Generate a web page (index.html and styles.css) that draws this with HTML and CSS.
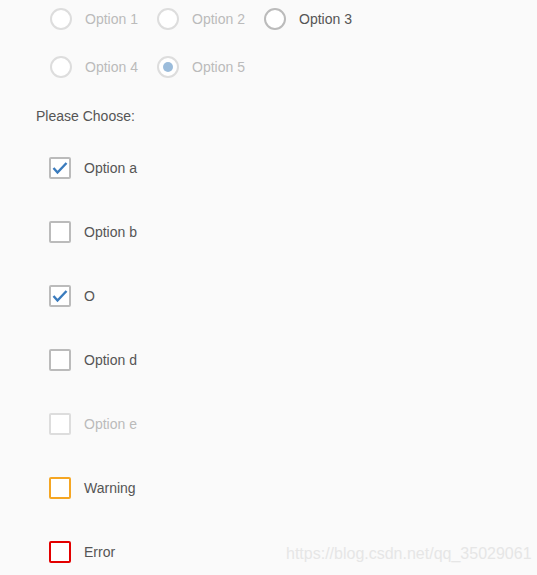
FILE: index.html
```html
<!DOCTYPE html>
<html lang="en">
<head>
    <meta charset="UTF-8">
    <title>Radio and Checkbox</title>
    <link rel="stylesheet" href="styles.css">
</head>
<body>
    <!-- Radio group -->
    <div class="radio-group">
        <label class="radio disabled"><span class="circle"></span>Option 1</label>
        <label class="radio disabled"><span class="circle"></span>Option 2</label>
        <label class="radio"><span class="circle"></span>Option 3</label>
        <label class="radio disabled"><span class="circle"></span>Option 4</label>
        <label class="radio disabled checked"><span class="circle"></span>Option 5</label>
    </div>

    <p class="choose">Please Choose:</p>

    <!-- Checkbox list -->
    <div class="check-list">
        <label class="check checked"><span class="box"><svg viewBox="0 0 22 22"><path d="M4.5 11 L8.5 15.5 L17.5 6"/></svg></span>Option a</label>
        <label class="check"><span class="box"></span>Option b</label>
        <label class="check checked"><span class="box"><svg viewBox="0 0 22 22"><path d="M4.5 11 L8.5 15.5 L17.5 6"/></svg></span>O</label>
        <label class="check"><span class="box"></span>Option d</label>
        <label class="check disabled"><span class="box"></span>Option e</label>
        <label class="check warning"><span class="box"></span>Warning</label>
        <label class="check error"><span class="box"></span>Error</label>
    </div>

    <div class="watermark">https://blog.csdn.net/qq_35029061</div>
</body>
</html>
```

FILE: styles.css
```css
body {
    font-family: "Liberation Sans", Arial, sans-serif;
    font-size: 14px;
    background-color: #fafafa;
    color: #555;
    margin: 0;
    padding: 0;
    position: relative;
    height: 575px;
    overflow: hidden;
}
.radio-group {
    display: grid;
    grid-template-columns: repeat(3, 107px);
    row-gap: 26px;
    padding: 8px 0 0 50px;
}
.radio {
    display: flex;
    align-items: center;
    gap: 13px;
    height: 22px;
    line-height: 16px;
}
.radio .circle {
    box-sizing: border-box;
    width: 22px;
    height: 22px;
    border: 2px solid #bbb;
    border-radius: 50%;
    background-color: #fff;
    display: flex;
    align-items: center;
    justify-content: center;
}
.radio.disabled {
    color: #bbb;
}
.radio.disabled .circle {
    border-color: #ddd;
}
.radio.checked .circle::after {
    content: "";
    width: 10px;
    height: 10px;
    border-radius: 50%;
    background-color: #9bbcdb;
}
.choose {
    margin: 30px 0 0 36px;
    line-height: 16px;
}
.check-list {
    padding: 12px 0 0 49px;
}
.check {
    display: flex;
    align-items: center;
    gap: 13px;
    height: 64px;
    line-height: 16px;
}
.check .box {
    box-sizing: border-box;
    width: 22px;
    height: 22px;
    border: 2px solid #bbb;
    border-radius: 2px;
    background-color: #fff;
    position: relative;
}
.check .box svg {
    position: absolute;
    left: -2px;
    top: -2px;
    width: 22px;
    height: 22px;
}
.check .box path {
    fill: none;
    stroke: #3a7bbd;
    stroke-width: 2.4;
}
.check.disabled {
    color: #bbb;
}
.check.disabled .box {
    border-color: #ddd;
}
.check.warning .box {
    border-color: #f5a623;
}
.check.error .box {
    border-color: #e30000;
}
.watermark {
    position: absolute;
    left: 286px;
    top: 545px;
    font-size: 16px;
    color: #e6e6e6;
}
```
